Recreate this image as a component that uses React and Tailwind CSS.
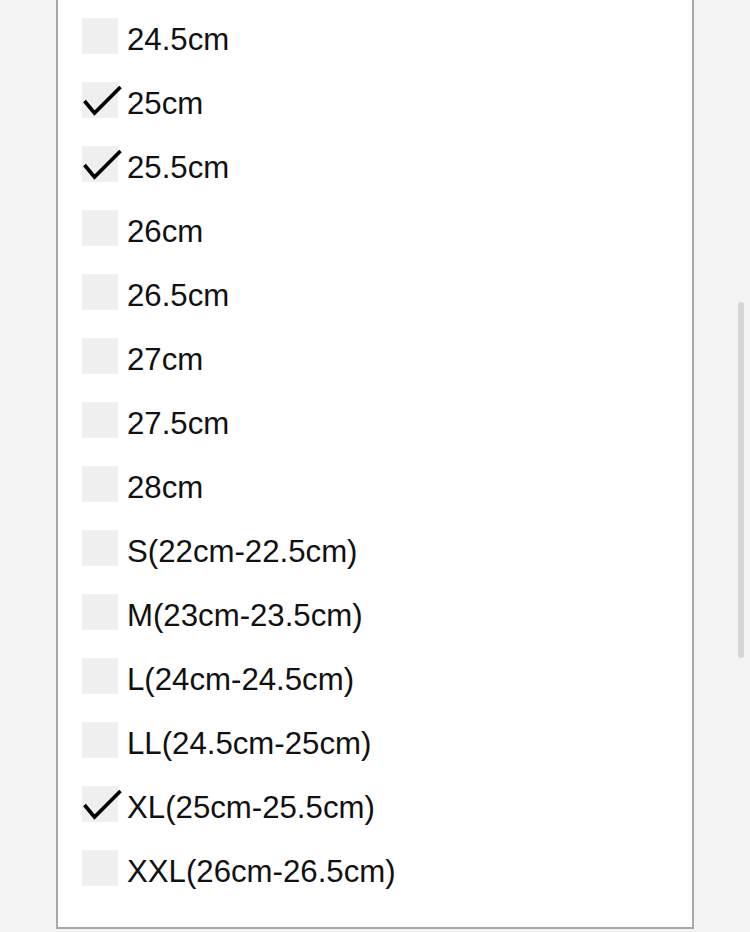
import React from "react";

const items = [
  ["24.5cm", false],
  ["25cm", true],
  ["25.5cm", true],
  ["26cm", false],
  ["26.5cm", false],
  ["27cm", false],
  ["27.5cm", false],
  ["28cm", false],
  ["S(22cm-22.5cm)", false],
  ["M(23cm-23.5cm)", false],
  ["L(24cm-24.5cm)", false],
  ["LL(24.5cm-25cm)", false],
  ["XL(25cm-25.5cm)", true],
  ["XXL(26cm-26.5cm)", false],
];

function Box({ checked }) {
  return (
    <div className="relative w-[36px] h-[36px] bg-[#efefef] shrink-0">
      {checked && (
        <svg
          className="absolute left-0 top-0 overflow-visible"
          width="36"
          height="36"
          viewBox="0 0 36 36"
        >
          <path
            d="M2.5 19 L12.5 31 L38.5 5"
            fill="none"
            stroke="#000"
            strokeWidth="3.6"
            strokeLinecap="butt"
            strokeLinejoin="miter"
          />
        </svg>
      )}
    </div>
  );
}

export default function App() {
  return (
    <div
      className="relative w-[750px] h-[932px] bg-[#f4f4f4] overflow-hidden"
      style={{ fontFamily: '"Liberation Sans", Arial, sans-serif' }}
    >
      <div className="ml-[56px] w-[638px] h-[929px] bg-white border-2 border-t-0 border-[#a8a8a8] pt-[4px] pl-[24px]">
        {items.map(([label, checked]) => (
          <div key={label} className="h-16 flex items-center">
            <Box checked={checked} />
            <span className="ml-[9px] pt-[7px] text-[31.2px] leading-none text-[#111]">
              {label}
            </span>
          </div>
        ))}
      </div>
      <div className="absolute left-[738px] top-[302px] w-[6px] h-[356px] rounded-full bg-[#d6d6d6]" />
    </div>
  );
}
